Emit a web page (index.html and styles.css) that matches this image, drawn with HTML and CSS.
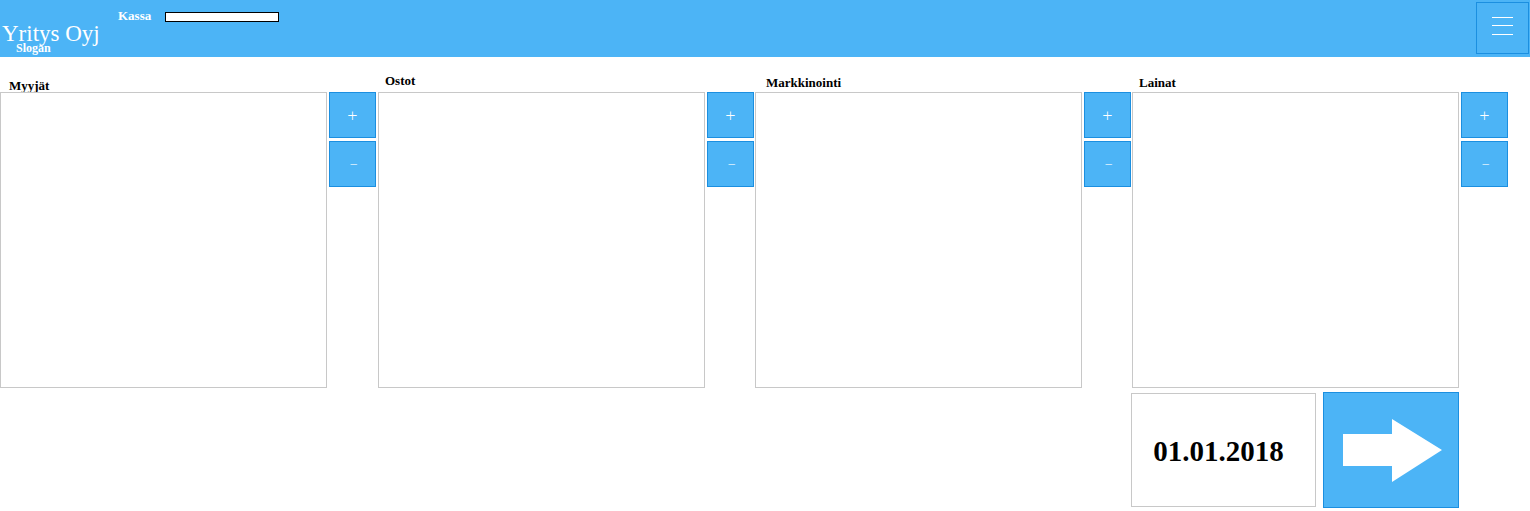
FILE: index.html
```html
<!DOCTYPE html>
<html lang="fi">
<head>
<meta charset="utf-8">
<title>Yritys Oyj</title>
<link rel="stylesheet" href="styles.css">
</head>
<body>
<header class="topbar">
  <div class="brand">
    <div class="brand-name">Yritys Oyj</div>
    <div class="brand-slogan">Slogan</div>
  </div>
  <div class="cash">
    <span class="cash-label">Kassa</span>
    <span class="cash-bar"></span>
  </div>
  <div class="spacer"></div>
  <button class="menu-btn" aria-label="Valikko">
    <svg width="21" height="18" viewBox="0 0 21 18"><g stroke="#fff" stroke-width="1"><line x1="0" y1="0.5" x2="21" y2="0.5"/><line x1="0" y1="8.5" x2="21" y2="8.5"/><line x1="0" y1="17.5" x2="21" y2="17.5"/></g></svg>
  </button>
</header>

<main class="board">
  <section class="col col-first">
    <div class="col-label label-1">Myyjät</div>
    <div class="col-row">
      <div class="list-box"></div>
      <div class="btn-stack">
        <button class="sq-btn">+</button>
        <button class="sq-btn minus">−</button>
      </div>
    </div>
  </section>
  <section class="col">
    <div class="col-label label-2">Ostot</div>
    <div class="col-row">
      <div class="list-box"></div>
      <div class="btn-stack">
        <button class="sq-btn">+</button>
        <button class="sq-btn minus">−</button>
      </div>
    </div>
  </section>
  <section class="col">
    <div class="col-label label-3">Markkinointi</div>
    <div class="col-row">
      <div class="list-box"></div>
      <div class="btn-stack">
        <button class="sq-btn">+</button>
        <button class="sq-btn minus">−</button>
      </div>
    </div>
  </section>
  <section class="col">
    <div class="col-label label-4">Lainat</div>
    <div class="col-row">
      <div class="list-box"></div>
      <div class="btn-stack">
        <button class="sq-btn">+</button>
        <button class="sq-btn minus">−</button>
      </div>
    </div>
    <div class="turn-row">
      <div class="date-box">01.01.2018</div>
      <button class="next-btn" aria-label="Seuraava">
        <svg width="134" height="114" viewBox="0 0 134 114"><polygon points="19,41 68,41 68,26 118,57 68,89 68,73 19,73" fill="#fff"/></svg>
      </button>
    </div>
  </section>
</main>
</body>
</html>
```

FILE: styles.css
```css
* { box-sizing: border-box; }

body {
  margin: 0;
  font-family: "Liberation Serif", "Times New Roman", serif;
  color: #000;
  background: #fff;
}

.topbar {
  display: flex;
  align-items: flex-start;
  height: 57px;
  background: #4cb4f6;
  color: #fff;
  padding-right: 1px;
}

.brand {
  width: 104px;
  padding: 24px 0 0 2px;
}

.brand-name {
  font-size: 23px;
  line-height: 19px;
  white-space: nowrap;
}

.brand-slogan {
  font-size: 12px;
  line-height: 10px;
  font-weight: bold;
  margin: 0 0 0 14px;
}

.cash {
  display: flex;
  align-items: center;
  padding-top: 11px;
  margin-left: 14px;
}

.cash-label {
  font-size: 13px;
  line-height: 13px;
  font-weight: bold;
  margin-top: -2px;
}

.cash-bar {
  display: block;
  width: 114px;
  height: 10px;
  margin-left: 14px;
  background: #fff;
  border: 1px solid #000;
}

.spacer { flex: 1; }

.menu-btn {
  width: 53px;
  height: 52px;
  margin-top: 2px;
  padding: 0 0 5px;
  display: flex;
  align-items: center;
  justify-content: center;
  background: #4cb4f6;
  border: 1px solid #1b8fe0;
}

.board {
  display: flex;
  align-items: flex-start;
  gap: 1px;
}

.col {
  display: flex;
  flex-direction: column;
}

.col-first { margin-right: 1px; }

.col-label {
  height: 35px;
  display: flex;
  align-items: flex-end;
  font-size: 13px;
  line-height: 13px;
  font-weight: bold;
}

.label-1 { padding: 0 0 0 9px; }
.label-2 { padding: 0 0 5px 7px; }
.label-3 { padding: 0 0 3px 11px; }
.label-4 { padding: 0 0 3px 7px; }

.col-row {
  display: flex;
  align-items: flex-start;
  gap: 2px;
}

.list-box {
  width: 327px;
  height: 296px;
  border: 1px solid #c8c8c8;
  background: #fff;
}

.btn-stack {
  display: flex;
  flex-direction: column;
  gap: 3px;
}

.sq-btn {
  width: 47px;
  height: 46px;
  padding: 0;
  background: #4cb4f6;
  border: 1px solid #1b8fe0;
  color: #fff;
  font-family: "Open Sans", "Liberation Sans", sans-serif;
  font-size: 18px;
  line-height: 18px;
  font-weight: 300;
}

.sq-btn.minus {
  font-size: 14px;
  padding-left: 2px;
}

.turn-row {
  display: flex;
  align-items: center;
  gap: 7px;
  margin-top: 4px;
  margin-left: -1px;
}

.date-box {
  width: 185px;
  height: 114px;
  border: 1px solid #c8c8c8;
  display: flex;
  align-items: center;
  justify-content: center;
  font-size: 29px;
  font-weight: bold;
  padding: 2px 10px 0 0;
}

.next-btn {
  width: 136px;
  height: 116px;
  padding: 0;
  display: block;
  background: #4cb4f6;
  border: 1px solid #1b8fe0;
}

.next-btn svg { display: block; }
```
